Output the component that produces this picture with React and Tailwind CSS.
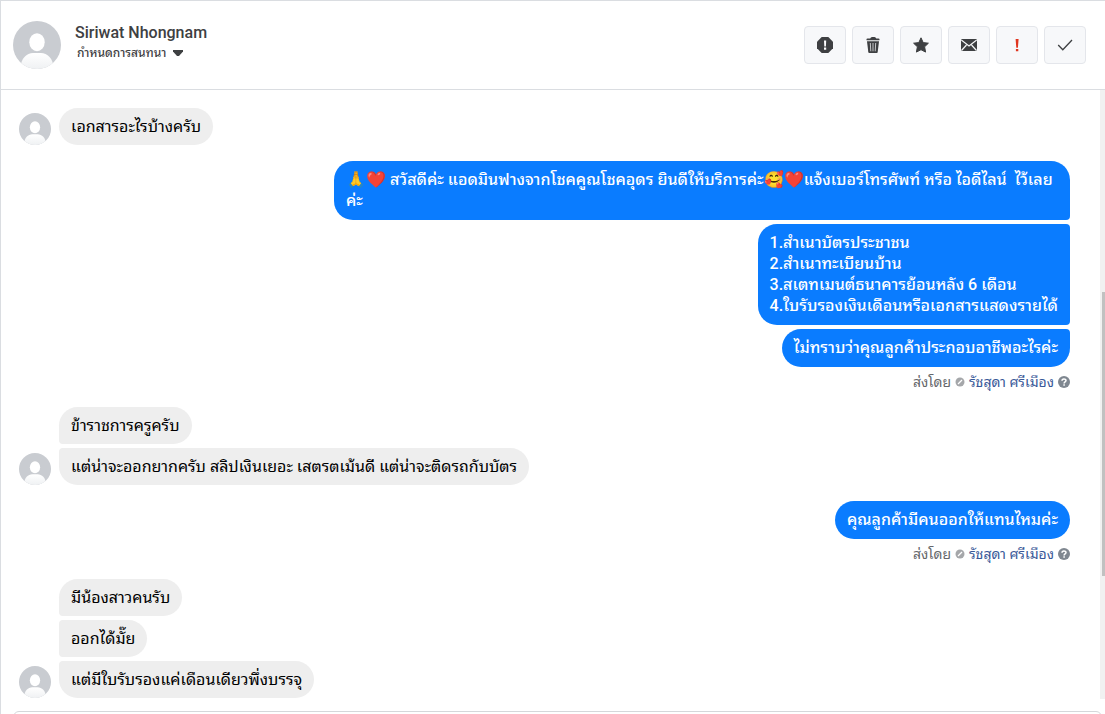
import React from "react";

function Avatar({ className }) {
  return (
    <svg viewBox="0 0 48 48" className={`shrink-0 rounded-full ${className}`} aria-hidden="true">
      <defs>
        <linearGradient id="avatarBody" x1="0" y1="0" x2="0" y2="1">
          <stop offset="0" stopColor="#ffffff" />
          <stop offset="1" stopColor="#eff1f3" />
        </linearGradient>
      </defs>
      <rect width="48" height="48" fill="#c9ccd1" />
      <ellipse cx="24" cy="21.200" rx="7.700" ry="9" fill="#ffffff" />
      <path d="M7.500 48C7.500 37 14 32 20 32h8c6 0 12.500 5 12.500 16z" fill="url(#avatarBody)" />
    </svg>
  );
}

const icons = {
  spam: (
    <>
      <path d="M4.700 0h6.600L16 4.700v6.600L11.300 16H4.700L0 11.300V4.700z" fill="#3e4042" />
      <path d="M7 3.500h2.200L8.900 9.500H7.300zM7 10.500h2.200v2.200H7z" fill="#fff" />
    </>
  ),
  trash: (
    <>
      <path d="M1.500 3.200V2.200Q1.500 1.500 2.500 1.500H5.200Q5.700 0 7 0H9.500Q10.800 0 11.300 1.500H13.500Q14.500 1.500 14.500 2.200V3.200z" fill="#3e4042" />
      <path d="M2 4.200h12l-1.300 11Q12.600 16 11.700 16H4.300Q3.400 16 3.300 15.200z" fill="#3e4042" />
      <path d="M5.300 6l.5 8.300M8 6v8.300M10.700 6l-.5 8.300" stroke="#c6c8ca" strokeWidth="1" fill="none" />
    </>
  ),
  star: (
    <path d="M8 .8l2.200 4.800 5.200.6-3.800 3.600 1 5.300L8 12.700l-4.600 2.400 1-5.300L.6 6.200l5.200-.6z" fill="#3e4042" stroke="#3e4042" strokeWidth="1" strokeLinejoin="round" />
  ),
  mail: (
    <>
      <rect y="2" width="16" height="12" rx="1.200" fill="#3e4042" />
      <path d="M.3 3l7.700 6 7.700-6M.5 13.500l5-5.500M15.500 13.500l-5-5.500" stroke="#f7f8fa" strokeWidth="1.200" fill="none" />
    </>
  ),
  follow: <path d="M6.600 2h3L8.900 10.800H7.300zM6.900 12h2.400v2.200H6.900z" fill="#e0351f" />,
  done: <path d="M1.200 8l4.600 4.800L15 3" stroke="#3e4042" strokeWidth="1.300" fill="none" />,
};

const actions = [
  ["spam", "สแปม"],
  ["trash", "ลบ"],
  ["star", "ติดดาว"],
  ["mail", "ยังไม่ได้อ่าน"],
  ["follow", "ติดตาม"],
  ["done", "เสร็จสิ้น"],
];

function Header() {
  return (
    <header className="flex h-[89px] shrink-0 items-center justify-between border-b border-[#dadde1] pr-[19px] pl-3">
      <div className="flex items-center gap-3.5">
        <Avatar className="size-12" />
        <div className="flex flex-col items-start pb-1">
          <h1 className="text-[16px] leading-5 font-medium text-[#3e4042]">Siriwat Nhongnam</h1>
          <button className="flex items-center gap-1.5 px-0.5 text-[12px] leading-5 font-medium text-[#3e4042]">
            กำหนดการสนทนา
            <svg viewBox="0 0 12 8" className="h-2 w-3" aria-hidden="true">
              <path d="M1 1h10v1.500L7 7H5L1 2.500z" fill="#3e4042" />
            </svg>
          </button>
        </div>
      </div>
      <div className="flex gap-1.5">
        {actions.map(([id, label]) => (
          <button
            key={id}
            aria-label={label}
            className="flex h-[38px] w-[42px] items-center justify-center rounded border border-[#e4e6eb] bg-[#f7f8fa]"
          >
            <svg viewBox="0 0 16 16" className="size-4" aria-hidden="true">
              {icons[id]}
            </svg>
          </button>
        ))}
      </div>
    </header>
  );
}

function Received({ messages }) {
  return (
    <div className="flex items-end gap-2 pl-[18px]">
      <Avatar className="size-8" />
      <div className="flex flex-col items-start gap-1">
        {messages.map((m, i) => (
          <p
            key={m}
            className={`rounded-r-[19px] bg-[#eeeeee] px-3 py-2 text-[16px] leading-[21px] text-black ${
              i === 0 ? "rounded-tl-[19px]" : "rounded-tl"
            } ${i === messages.length - 1 ? "rounded-bl-[19px]" : "rounded-bl"}`}
          >
            {m}
          </p>
        ))}
      </div>
    </div>
  );
}

function Sent({ messages }) {
  return (
    <div className="flex flex-col items-end gap-1 pr-[30px]">
      {messages.map(({ text, wide }, i) => (
        <p
          key={text}
          className={`max-w-[736px] rounded-l-[19px] bg-[#0a7cff] px-3 pt-2 pb-[9px] text-[16px] leading-[21px] font-medium whitespace-pre-wrap text-white ${
            wide ? "w-full" : ""
          } ${i === 0 ? "rounded-tr-[19px]" : "rounded-tr"} ${
            i === messages.length - 1 ? "rounded-br-[19px]" : "rounded-br"
          }`}
        >
          {text}
        </p>
      ))}
      <div className="flex h-5 items-center gap-1 pt-0.5 text-[14px] leading-5 text-[#65676b]">
        <span>ส่งโดย</span>
        <svg viewBox="0 0 10 10" className="size-2.5" aria-hidden="true">
          <circle cx="5" cy="5" r="4.500" fill="#a5a7aa" />
          <path d="M3 7l4-4" stroke="#fff" strokeWidth="1.300" />
        </svg>
        <a href="#" className="text-[#385898]">รัชสุดา ศรีเมือง</a>
        <svg viewBox="0 0 12 12" className="size-3" aria-hidden="true">
          <circle cx="6" cy="6" r="6" fill="#7f8790" />
          <path d="M4 4.700C4 2.300 8 2.300 8 4.600 8 6 6.100 5.900 6.100 7.400M6.100 8.300v1.500" stroke="#fff" strokeWidth="1.500" fill="none" />
        </svg>
      </div>
    </div>
  );
}

export default function App() {
  return (
    <div className="flex h-screen flex-col overflow-hidden border-t border-l border-[#dadde1] bg-white font-['Roboto','Tahoma','Noto_Sans_Thai_Looped','Loma','Waree','Garuda',sans-serif]">
      <Header />
      <main className="flex min-h-0 flex-1">
        <div className="flex min-w-0 flex-1 flex-col gap-4 overflow-hidden pt-[18px]">
          <Received messages={["เอกสารอะไรบ้างครับ"]} />
          <Sent
            messages={[
              {
                text: "🙏❤️ สวัสดีค่ะ แอดมินฟางจากโชคคูณโชคอุดร ยินดีให้บริการค่ะ🥰❤️แจ้งเบอร์โทรศัพท์ หรือ ไอดีไลน์  ไว้เลย\nค่ะ",
                wide: true,
              },
              {
                text: "1.สำเนาบัตรประชาชน\n2.สำเนาทะเบียนบ้าน\n3.สเตทเมนต์ธนาคารย้อนหลัง 6 เดือน\n4.ใบรับรองเงินเดือนหรือเอกสารแสดงรายได้",
              },
              { text: "ไม่ทราบว่าคุณลูกค้าประกอบอาชีพอะไรค่ะ" },
            ]}
          />
          <Received messages={["ข้าราชการครูครับ", "แต่น่าจะออกยากครับ สลิปเงินเยอะ เสตรตเม้นดี แต่น่าจะติดรถกับบัตร"]} />
          <Sent messages={[{ text: "คุณลูกค้ามีคนออกให้แทนไหมค่ะ" }]} />
          <Received messages={["มีน้องสาวคนรับ", "ออกได้มั๊ย", "แต่มีใบรับรองแค่เดือนเดียวพึ่งบรรจุ"]} />
        </div>
        <div className="flex w-[5px] flex-col items-end bg-[#f1f1f1]" aria-hidden="true">
          <div className="flex-[202]" />
          <div className="w-[3px] flex-[284] bg-[#c1c1c1]" />
          <div className="flex-[123]" />
        </div>
      </main>
      <footer className="h-[15px] shrink-0 overflow-hidden pt-3 pr-[3px] pl-3">
        <div className="h-10 rounded-md border border-[#d5d7da]" />
      </footer>
    </div>
  );
}
